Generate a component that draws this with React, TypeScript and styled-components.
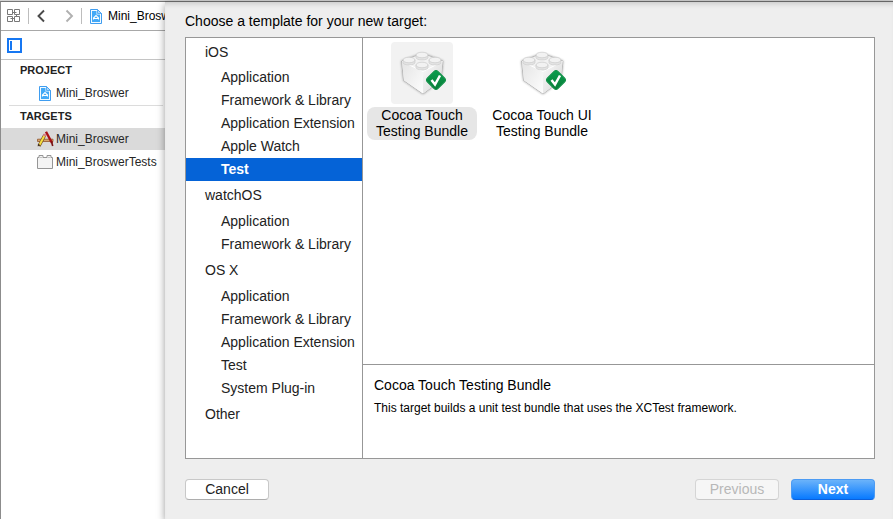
import React, { useState } from "react";
import styled, { createGlobalStyle } from "styled-components";

const GlobalStyle = createGlobalStyle`
  *, *::before, *::after { box-sizing: border-box; }
  body {
    margin: 0;
    background: #fff;
    color: #000;
    font-family: "Liberation Sans", Arial, sans-serif;
    font-size: 14px;
  }
  button { font: inherit; color: inherit; }
  h1, h2, h3, p, ul { margin: 0; padding: 0; font-weight: normal; font-size: inherit; }
`;

const Page = styled.div`
  display: flex;
  min-height: 100vh;
  border-top: 1px solid #d4d4d4;
`;

const Sidebar = styled.aside`
  display: flex;
  flex-direction: column;
  flex: 0 0 165px;
  min-width: 0;
  overflow: hidden;
  border-top: 1px solid #777;
  border-left: 1px solid #8c8c8c;
  font-size: 12px;
`;

const PathBar = styled.nav`
  display: flex;
  align-items: center;
  height: 29px;
  padding-left: 6px;
  border-bottom: 1px solid #a8a8a8;
  white-space: nowrap;
`;

const IconButton = styled.button`
  display: flex;
  padding: 0;
  border: 0;
  background: none;
`;

const Separator = styled.span`
  width: 1px;
  height: 16px;
  margin: 0 8px 0 7px;
  flex: none;
  background: #bdbdbd;
`;

const HistoryButtons = styled.div`
  display: flex;
  gap: 19px;
`;

const Crumb = styled.span`
  display: flex;
  align-items: center;
  gap: 6px;
`;

const PanelBar = styled.div`
  display: flex;
  align-items: center;
  height: 29px;
  padding-left: 6px;
  border-bottom: 1px solid #c4c4c4;
`;

const GroupTitle = styled.h2`
  height: 22px;
  padding-left: 19px;
  font-size: 11px;
  font-weight: bold;
  line-height: 20px;
  color: #222;
`;

const GroupRule = styled.hr`
  height: 1px;
  margin: 0 2px 0 8px;
  border: 0;
  background: #dcdcdc;
`;

const TargetRow = styled.button<{ $selected?: boolean }>`
  display: flex;
  align-items: center;
  gap: 2px;
  width: 100%;
  height: 22px;
  margin-bottom: 1px;
  padding: 0 0 0 35px;
  border: 0;
  background: ${(p) => (p.$selected ? "#dadada" : "transparent")};
  color: #262626;
  line-height: 14px;
  text-align: left;
  white-space: nowrap;
`;

const IconSlot = styled.span`
  display: flex;
  justify-content: center;
  flex: 0 0 18px;
`;

const Sheet = styled.main`
  position: relative;
  display: flex;
  flex-direction: column;
  flex: 1;
  min-width: 0;
  padding: 10px 18px 19px 20px;
  border-top: 1px solid #666;
  background: #eee;
  box-shadow: 0 3px 8px rgba(0, 0, 0, 0.4), inset 0 5px 5px -3px rgba(0, 0, 0, 0.15);
`;

const SheetTitle = styled.h1`
  height: 25px;
  line-height: 19px;
`;

const Chooser = styled.div`
  display: grid;
  grid-template-columns: 177px 1fr;
  flex: 1;
  border: 1px solid #979797;
  background: #fff;
`;

const Categories = styled.nav`
  border-right: 1px solid #979797;
  color: #222;
`;

const Platform = styled.h2`
  height: 29px;
  padding-left: 19px;
  line-height: 29px;
  section:first-child > & { height: 28px; line-height: 28px; }
`;

const CategoryButton = styled.button<{ $selected: boolean }>`
  display: block;
  width: 100%;
  height: 23px;
  padding: 0 0 0 35px;
  border: 0;
  background: ${(p) => (p.$selected ? "#0563d7" : "transparent")};
  color: ${(p) => (p.$selected ? "#fff" : "#222")};
  font-weight: ${(p) => (p.$selected ? "bold" : "normal")};
  line-height: 23px;
  text-align: left;
  white-space: nowrap;
`;

const Content = styled.div`
  display: flex;
  flex-direction: column;
  min-width: 0;
`;

const Templates = styled.div`
  display: flex;
  flex: 1;
  align-items: flex-start;
  gap: 10px;
  padding: 4px;
`;

const TemplateButton = styled.button`
  display: flex;
  flex-direction: column;
  align-items: center;
  gap: 3px;
  width: 110px;
  padding: 0;
  border: 0;
  background: none;
`;

const Thumb = styled.span<{ $selected: boolean }>`
  display: flex;
  width: 62px;
  height: 62px;
  border-radius: 4px;
  background: ${(p) => (p.$selected ? "#f2f2f2" : "transparent")};
`;

const TemplateName = styled.span<{ $selected: boolean }>`
  width: 100%;
  padding-bottom: 1px;
  border-radius: 8px;
  background: ${(p) => (p.$selected ? "#e6e6e6" : "transparent")};
  line-height: 16px;
  white-space: pre-line;
`;

const Details = styled.section`
  height: 94px;
  padding: 10px 11px;
  border-top: 1px solid #979797;
`;

const DetailsTitle = styled.h2`
  line-height: 20px;
`;

const Description = styled.p`
  padding-top: 5px;
  font-size: 12px;
  line-height: 16px;
`;

const Footer = styled.footer`
  display: flex;
  gap: 12px;
  padding-top: 20px;
`;

const PushButton = styled.button<{ $primary?: boolean }>`
  width: 84px;
  height: 21px;
  padding: 0;
  border: 1px solid ${(p) => (p.$primary ? "#4c9bf3" : "#c8c8c8")};
  border-bottom-color: ${(p) => (p.$primary ? "#0a60dc" : "#adadad")};
  border-radius: 4px;
  background: ${(p) => (p.$primary ? "linear-gradient(#6bb3fa, #087aff)" : "#fff")};
  color: ${(p) => (p.$primary ? "#fff" : "#222")};
  font-weight: ${(p) => (p.$primary ? "bold" : "normal")};
  line-height: 19px;
  &:first-child { margin-right: auto; }
  &:disabled {
    border-color: #d5d5d5;
    border-bottom-color: #c8c8c8;
    background: #f6f6f6;
    color: #b8b8b8;
  }
`;

const GridIcon = () => (
  <svg width="14" height="14" viewBox="0 0 14 14" fill="none" stroke="#777" aria-hidden="true">
    <path d="M.5.5h5v5h-5zM7.500.5h5v5h-5zM.5 7.500h5v5h-5zM7.500 7.500h5v5h-5z" />
    <path d="M5.500 3.500h4M9.500 5.500v2M3.500 9.500h4" />
  </svg>
);

const Chevron = ({ forward }: { forward?: boolean }) => (
  <svg width="9" height="14" viewBox="0 0 9 14" fill="none" stroke={forward ? "#b0b0b0" : "#4a4a4a"} strokeWidth="1.900" aria-hidden="true">
    <path d={forward ? "M1.500 1.500 7 7l-5.500 5.500" : "M7 1.500 1.500 7 7 12.500"} />
  </svg>
);

const ProjectIcon = () => (
  <svg width="12" height="15" viewBox="0 0 12 15" aria-hidden="true">
    <path d="M.5.5h7l4 4v10H.5z" fill="#f2faff" stroke="#3f9df0" />
    <path d="M2 2h4.500v3.500H10V13H2z" fill="#43a9f7" />
    <path d="M7.500.5v4h4z" fill="#a9d7fb" stroke="#3f9df0" strokeWidth=".8" />
    <path d="M3.500 10.500V9L6 6.500 8.500 9v1.500M3.500 9.500h5" fill="none" stroke="#fff" strokeWidth="1.100" />
  </svg>
);

const PanelIcon = () => (
  <svg width="15" height="15" viewBox="0 0 15 15" aria-hidden="true">
    <path d="M1 1h13v13H1z" fill="#fff" stroke="#1677f2" strokeWidth="2" />
    <path d="M3 3h2v9H3z" fill="#1677f2" />
  </svg>
);

const AppIcon = () => (
  <svg width="17" height="16" viewBox="0 0 17 16" fill="none" aria-hidden="true">
    <path d="M.5 8.200h15.500v2.300H.5z" fill="#d6a66b" stroke="#92562c" strokeWidth=".8" />
    <path d="M7.800 4 2 15" stroke="#70451f" strokeWidth="3.200" />
    <path d="M7.600 4.200 2.500 14" stroke="#f5df40" strokeWidth="2" />
    <path d="m8.200 3-1 2.200" stroke="#d9828b" strokeWidth="3" />
    <path d="M9 .8 15 12" stroke="#a90e15" strokeWidth="2.400" />
    <path d="m14.500 10.500 1.200 4.500" stroke="#751212" strokeWidth="1.600" />
    <path d="m3.200 14-2.400 1.500.3-2.800z" fill="#423325" />
  </svg>
);

const BundleIcon = () => (
  <svg width="16" height="14" viewBox="0 0 16 14" aria-hidden="true">
    <path d="M.5 2.500H2v-2h4v2h4v-2h4v2h1.500v11H.5z" fill="#f4f4f4" stroke="#969696" />
    <path d="M2.500 2.500h3M10.500 2.500h3" stroke="#c5c5c5" />
  </svg>
);

const BrickIcon = ({ id }: { id: string }) => (
  <svg width="62" height="62" viewBox="0 0 62 62" aria-hidden="true">
    <defs>
      <linearGradient id={`${id}-left`} x1="0" y1="0" x2="1" y2="1">
        <stop stopColor="#e4e4e4" /><stop offset="1" stopColor="#fdfdfd" />
      </linearGradient>
      <linearGradient id={`${id}-right`} x1="0" y1="0" x2="1" y2="1">
        <stop stopColor="#fafafa" /><stop offset="1" stopColor="#d6d6d6" />
      </linearGradient>
      <linearGradient id={`${id}-badge`} x1="0" y1="0" x2="1" y2="1">
        <stop stopColor="#0b9f50" /><stop offset="1" stopColor="#087b36" />
      </linearGradient>
      <filter id={`${id}-shadow`} x="-20%" y="-20%" width="140%" height="140%">
        <feDropShadow dx="0" dy="0" stdDeviation="1" floodOpacity=".35" />
      </filter>
    </defs>
    <g filter={`url(#${id}-shadow)`}>
      <path d="M10.500 19 28 12.500h7L52 19l-2 19.500L32 52 12.500 38.500z" fill="#f2f2f2" stroke="#a6a6a6" strokeWidth=".7" strokeLinejoin="round" />
    </g>
    <path d="M11 19.500 32 29.500v22L13 38.200z" fill={`url(#${id}-left)`} />
    <path d="M51.500 19.500 32 29.500v22l17.700-13.300z" fill={`url(#${id}-right)`} />
    <path d="m11 19.500 21 10 19.500-10" fill="none" stroke="#fff" strokeWidth="1" />
    {[[31, 13], [18, 18], [44, 18], [31, 23]].map(([x, y]) => (
      <g key={`${x}-${y}`} strokeWidth=".6">
        <path d={`M${x - 6} ${y}v2.500c0 3.200 12 3.200 12 0V${y}z`} fill="#e4e4e4" stroke="#c8c8c8" />
        <ellipse cx={x} cy={y} rx="6" ry="2.800" fill="#f2f2f2" stroke="#c2c2c2" />
      </g>
    ))}
    <rect x="37.500" y="30.500" width="15" height="15" rx="3" transform="rotate(45 45 38)" fill={`url(#${id}-badge)`} stroke="#14924a" />
    <path d="m40.500 38 3.500 4.500 5-9" fill="none" stroke="#fff" strokeWidth="2.500" />
  </svg>
);

const platforms = [
  { name: "iOS", items: ["Application", "Framework & Library", "Application Extension", "Apple Watch", "Test"] },
  { name: "watchOS", items: ["Application", "Framework & Library"] },
  { name: "OS X", items: ["Application", "Framework & Library", "Application Extension", "Test", "System Plug-in"] },
  { name: "Other", items: [] },
];

const templates = [
  { id: "unit", label: "Cocoa Touch\nTesting Bundle" },
  { id: "ui", label: "Cocoa Touch UI\nTesting Bundle" },
];

export default function App() {
  const [category, setCategory] = useState("iOS/Test");
  const [template, setTemplate] = useState("unit");

  return (
    <>
      <GlobalStyle />
      <Page>
        <Sidebar>
          <PathBar aria-label="Path">
            <IconButton aria-label="Related items"><GridIcon /></IconButton>
            <Separator />
            <HistoryButtons>
              <IconButton aria-label="Back"><Chevron /></IconButton>
              <IconButton aria-label="Forward"><Chevron forward /></IconButton>
            </HistoryButtons>
            <Separator />
            <Crumb><ProjectIcon />Mini_Broswer</Crumb>
          </PathBar>
          <PanelBar>
            <IconButton aria-label="Toggle target list"><PanelIcon /></IconButton>
          </PanelBar>
          <section>
            <GroupTitle>PROJECT</GroupTitle>
            <TargetRow><IconSlot><ProjectIcon /></IconSlot>Mini_Broswer</TargetRow>
            <GroupRule />
          </section>
          <section>
            <GroupTitle>TARGETS</GroupTitle>
            <TargetRow $selected><IconSlot><AppIcon /></IconSlot>Mini_Broswer</TargetRow>
            <TargetRow><IconSlot><BundleIcon /></IconSlot>Mini_BroswerTests</TargetRow>
          </section>
        </Sidebar>
        <Sheet>
          <SheetTitle>Choose a template for your new target:</SheetTitle>
          <Chooser>
            <Categories aria-label="Template categories">
              {platforms.map((p) => (
                <section key={p.name}>
                  <Platform>{p.name}</Platform>
                  {p.items.map((item) => {
                    const key = `${p.name}/${item}`;
                    return (
                      <CategoryButton key={key} $selected={category === key} onClick={() => setCategory(key)}>
                        {item}
                      </CategoryButton>
                    );
                  })}
                </section>
              ))}
            </Categories>
            <Content>
              <Templates>
                {templates.map((t) => (
                  <TemplateButton key={t.id} aria-pressed={template === t.id} onClick={() => setTemplate(t.id)}>
                    <Thumb $selected={template === t.id}><BrickIcon id={t.id} /></Thumb>
                    <TemplateName $selected={template === t.id}>{t.label}</TemplateName>
                  </TemplateButton>
                ))}
              </Templates>
              <Details>
                <DetailsTitle>Cocoa Touch Testing Bundle</DetailsTitle>
                <Description>This target builds a unit test bundle that uses the XCTest framework.</Description>
              </Details>
            </Content>
          </Chooser>
          <Footer>
            <PushButton>Cancel</PushButton>
            <PushButton disabled>Previous</PushButton>
            <PushButton $primary>Next</PushButton>
          </Footer>
        </Sheet>
      </Page>
    </>
  );
}
